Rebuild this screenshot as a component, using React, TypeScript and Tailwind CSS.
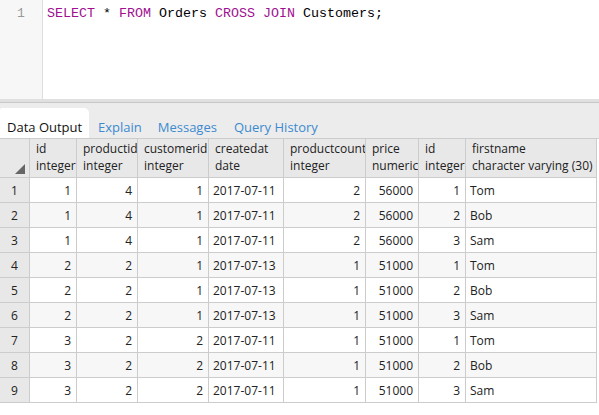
import React from "react";

const cols = [
  { w: 47, name: "id", type: "integer" },
  { w: 61, name: "productid", type: "integer" },
  { w: 71, name: "customerid", type: "integer" },
  { w: 75, name: "createdat", type: "date" },
  { w: 82, name: "productcount", type: "integer" },
  { w: 53, name: "price", type: "numeric" },
  { w: 47, name: "id", type: "integer" },
  { w: 131, name: "firstname", type: "character varying (30)" },
];

const rows: (string | number)[][] = [
  [1, 4, 1, "2017-07-11", 2, 56000, 1, "Tom"],
  [1, 4, 1, "2017-07-11", 2, 56000, 2, "Bob"],
  [1, 4, 1, "2017-07-11", 2, 56000, 3, "Sam"],
  [2, 2, 1, "2017-07-13", 1, 51000, 1, "Tom"],
  [2, 2, 1, "2017-07-13", 1, 51000, 2, "Bob"],
  [2, 2, 1, "2017-07-13", 1, 51000, 3, "Sam"],
  [3, 2, 2, "2017-07-11", 1, 51000, 1, "Tom"],
  [3, 2, 2, "2017-07-11", 1, 51000, 2, "Bob"],
  [3, 2, 2, "2017-07-11", 1, 51000, 3, "Sam"],
];

export default function App() {
  const kw = "text-[#a0108f]";
  return (
    <div
      className="w-[599px] h-[415px] bg-white overflow-hidden text-[13px] text-[#222]"
      style={{ fontFamily: '"Open Sans", sans-serif' }}
    >
      {/* Editor */}
      <div className="flex h-[99px]">
        <div className="w-[43px] bg-[#f7f7f7] border-r border-[#dddddd] text-[#999] pt-[5px] pl-[17px] leading-[18px]" style={{ fontFamily: '"Liberation Mono", monospace' }}>
          1
        </div>
        <div
          className="flex-1 pl-[4px] pt-[5px] leading-[18px] text-[13.33px] text-black whitespace-pre"
          style={{ fontFamily: '"Liberation Mono", monospace' }}
        >
          <span className={kw}>SELECT</span> * <span className={kw}>FROM</span> Orders{" "}
          <span className={kw}>CROSS</span> <span className={kw}>JOIN</span> Customers;
        </div>
      </div>
      <div className="h-[3px] bg-[#e0e0e0]" />
      <div className="h-[1px] bg-[#c8c8c8]" />
      {/* Tabs */}
      <div className="h-[36px] bg-[#ececec] border-b border-[#cccccc] flex items-end">
        <div className="w-[89px] h-[30px] bg-white rounded-tr-[5px] rounded-tl-[2px] pl-[7px] pt-[10px] leading-[18px] text-[#111]">
          Data Output
        </div>
        <div className="flex text-[#3d8ad0] leading-[18px] pb-[2px]">
          <span className="ml-[9px]">Explain</span>
          <span className="ml-[16px]">Messages</span>
          <span className="ml-[17px]">Query History</span>
        </div>
      </div>
      {/* Grid */}
      <div className="w-[597px] text-[12px]">
        <div className="flex h-[39px] bg-[#e8e8e8] border-b border-[#cccccc]">
          <div className="w-[30px] shrink-0 border-r border-[#cccccc] relative">
            <svg className="absolute left-[15px] top-[25px]" width="10" height="10" viewBox="0 0 10 10">
              <polygon points="10,0 10,10 0,10" fill="#666" />
            </svg>
          </div>
          {cols.map((c, i) => (
            <div
              key={i}
              style={{ width: c.w }}
              className="shrink-0 border-r border-[#cccccc] pl-[6px] pt-[2px] leading-[16.5px] whitespace-nowrap overflow-hidden"
            >
              <div>{c.name}</div>
              <div>{c.type}</div>
            </div>
          ))}
        </div>
        {rows.map((r, ri) => (
          <div
            key={ri}
            className={`flex h-[25px] border-b border-[#cccccc] ${ri % 2 === 1 ? "bg-[#f7f7f7]" : "bg-white"}`}
          >
            <div className="w-[30px] shrink-0 bg-[#e8e8e8] border-r border-[#cccccc] pl-[11px] pt-[1px] leading-[23px]">
              {ri + 1}
            </div>
            {r.map((v, ci) => (
              <div
                key={ci}
                style={{ width: cols[ci].w }}
                className={`shrink-0 border-r border-[#cccccc] pt-[1px] leading-[23px] whitespace-nowrap overflow-hidden ${
                  ci === 3 || ci === 7 ? "text-left pl-[4px]" : "text-right pr-[5px]"
                }`}
              >
                {v}
              </div>
            ))}
          </div>
        ))}
      </div>
    </div>
  );
}
